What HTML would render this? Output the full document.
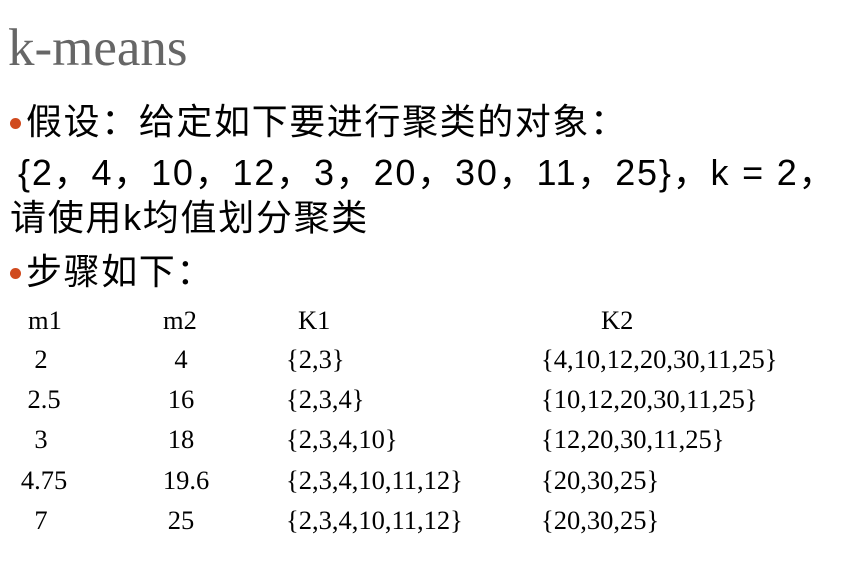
<!DOCTYPE html>
<html><head><meta charset="utf-8"><style>
body{margin:0;width:847px;height:572px;background:#fff;position:relative;overflow:hidden}
.a{position:absolute;white-space:nowrap;line-height:1}
.t{font-family:"Liberation Serif",serif;font-size:53px;color:#666;left:8px;top:22px}
.c{font-family:"Liberation Sans","Noto Sans CJK SC",sans-serif;font-size:36px;color:#000}
.d{position:absolute;width:11px;height:11px;border-radius:50%;background:#d04a1e}
.s{font-family:"Liberation Serif",serif;font-size:26.5px;color:#000}
.ctr{transform:translateX(-50%)}
</style></head><body>
<div class="a t">k-means</div>
<div class="d" style="left:10px;top:118px"></div>
<div class="a c" style="left:26px;top:104px;letter-spacing:1.6px">假设：给定如下要进行聚类的对象：</div>
<div class="a c" style="left:18px;top:155px;letter-spacing:1.8px">{2，4，10，12，3，20，30，11，25}，k = 2，</div>
<div class="a c" style="left:10px;top:200px;letter-spacing:1.7px">请使用k均值划分聚类</div>
<div class="d" style="left:10px;top:268px"></div>
<div class="a c" style="left:26px;top:254px;letter-spacing:1.6px">步骤如下：</div>

<div class="a s" style="left:28px;top:307px">m1</div>
<div class="a s" style="left:163px;top:307px">m2</div>
<div class="a s" style="left:298px;top:307px">K1</div>
<div class="a s" style="left:601px;top:307px">K2</div>

<div class="a s ctr" style="left:41px;top:346px">2</div>
<div class="a s ctr" style="left:181px;top:346px">4</div>
<div class="a s" style="left:286px;top:346px">{2,3}</div>
<div class="a s" style="left:541px;top:346px">{4,10,12,20,30,11,25}</div>

<div class="a s ctr" style="left:44px;top:386px">2.5</div>
<div class="a s ctr" style="left:181px;top:386px">16</div>
<div class="a s" style="left:286px;top:386px">{2,3,4}</div>
<div class="a s" style="left:541px;top:386px">{10,12,20,30,11,25}</div>

<div class="a s ctr" style="left:41px;top:426px">3</div>
<div class="a s ctr" style="left:181px;top:426px">18</div>
<div class="a s" style="left:286px;top:426px">{2,3,4,10}</div>
<div class="a s" style="left:541px;top:426px">{12,20,30,11,25}</div>

<div class="a s ctr" style="left:44px;top:467px">4.75</div>
<div class="a s ctr" style="left:186px;top:467px">19.6</div>
<div class="a s" style="left:286px;top:467px">{2,3,4,10,11,12}</div>
<div class="a s" style="left:541px;top:467px">{20,30,25}</div>

<div class="a s ctr" style="left:41px;top:507px">7</div>
<div class="a s ctr" style="left:181px;top:507px">25</div>
<div class="a s" style="left:286px;top:507px">{2,3,4,10,11,12}</div>
<div class="a s" style="left:541px;top:507px">{20,30,25}</div>
</body></html>
